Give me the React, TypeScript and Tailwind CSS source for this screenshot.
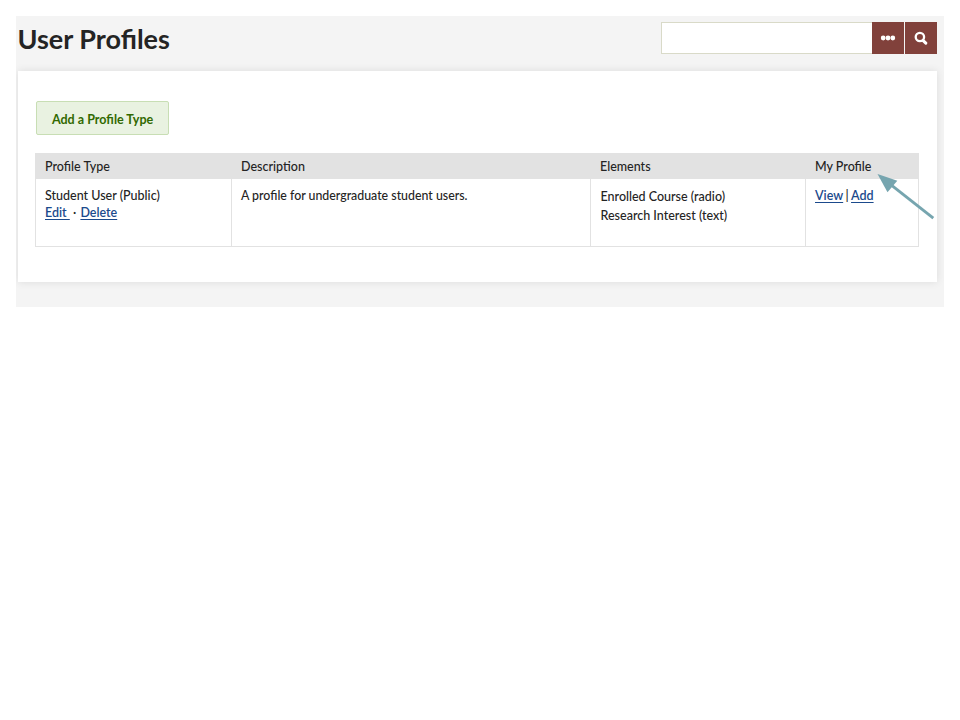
import React from "react";

const link = "text-[#1b4a8c] underline decoration-1 underline-offset-2 font-semibold";

function SearchBar() {
  return (
    <div className="flex h-8 w-[276px]">
      <input aria-label="Search" className="h-8 w-[211px] border border-r-0 border-[#d9dac8] bg-white outline-none" />
      <button aria-label="More options" className="flex h-8 w-8 items-center justify-center bg-[#81413b]">
        <svg width="16" height="6" viewBox="0 0 16 6" fill="#fff">
          <circle cx="3.2" cy="3" r="2.4" />
          <circle cx="8" cy="3" r="2.4" />
          <circle cx="12.8" cy="3" r="2.4" />
        </svg>
      </button>
      <button aria-label="Search" className="ml-px flex h-8 w-8 items-center justify-center bg-[#81413b]">
        <svg width="14" height="14" viewBox="0 0 14 14" fill="none" stroke="#fff">
          <circle cx="5.9" cy="6" r="4.2" strokeWidth="2.3" />
          <path d="M9.2 9.6L11.8 12.1" strokeWidth="3" strokeLinecap="round" />
        </svg>
      </button>
    </div>
  );
}

function ProfileTable() {
  const head = "h-[25px] border border-[#e2e2e2] p-0 pl-[9px] pt-px text-left font-medium";
  const cell = "h-[68px] border border-[#e2e2e2] p-0 pl-[9px] text-left align-top";
  return (
    <table className="mt-[18px] w-[883px] table-fixed border-collapse text-[12.5px] leading-[17px] font-medium">
      <colgroup>
        <col className="w-[196px]" />
        <col className="w-[359px]" />
        <col className="w-[215px]" />
        <col className="w-[113px]" />
      </colgroup>
      <thead className="bg-[#e2e2e2]">
        <tr>
          <th className={head}>Profile Type</th>
          <th className={head}>Description</th>
          <th className={head}>Elements</th>
          <th className={head}>My Profile</th>
        </tr>
      </thead>
      <tbody>
        <tr>
          <td className={cell}>
            <div className="pt-2">Student User (Public)</div>
            <div className="whitespace-pre"><a className={link}>Edit </a><span className="mr-px"> · </span><a className={link}>Delete</a></div>
          </td>
          <td className={cell}><div className="pt-2 text-[12.35px]">A profile for undergraduate student users.</div></td>
          <td className={cell}>
            <div className="pt-[9px] pl-[0.5px] leading-[18.5px]">
              <div>Enrolled Course (radio)</div>
              <div>Research Interest (text)</div>
            </div>
          </td>
          <td className={cell}><div className="pt-2 [word-spacing:-0.8px]"><a className={link}>View</a> | <a className={link}>Add</a></div></td>
        </tr>
      </tbody>
    </table>
  );
}

export default function App() {
  return (
    <div className="relative h-[720px] w-[960px] overflow-hidden bg-white p-4 font-['Lato',sans-serif] text-[#242424]">
      <main className="h-[291px] w-[928px] overflow-hidden bg-[#f4f4f4] pl-0.5 pr-[7px]">
        <header className="flex h-[55px] items-start justify-between pt-1.5">
          <h1 className="-ml-[0.5px] text-[27px] leading-[34px] font-bold">User Profiles</h1>
          <SearchBar />
        </header>
        <section className="h-[211px] bg-white pl-[17px] pt-[30px] shadow-[0_0_8px_rgba(0,0,0,0.1)]">
          <button className="ml-px flex h-[34px] w-[133px] items-center justify-center rounded-[2px] border border-[#c8deb4] bg-[#e9f2e1] pt-[2px] text-[14px] leading-[32px] font-bold whitespace-nowrap text-[#316900]">
            <span className="block scale-x-[0.895]">Add a Profile Type</span>
          </button>
          <ProfileTable />
        </section>
      </main>
      <svg className="absolute left-[870px] top-[166px]" width="72" height="60" viewBox="870 166 72 60">
        <path d="M892 185.7L933.3 218.2" stroke="#76a5af" strokeWidth="2.9" />
        <path d="M877.5 174L897.3 180.8L887.5 192.3Z" fill="#76a5af" />
      </svg>
    </div>
  );
}
